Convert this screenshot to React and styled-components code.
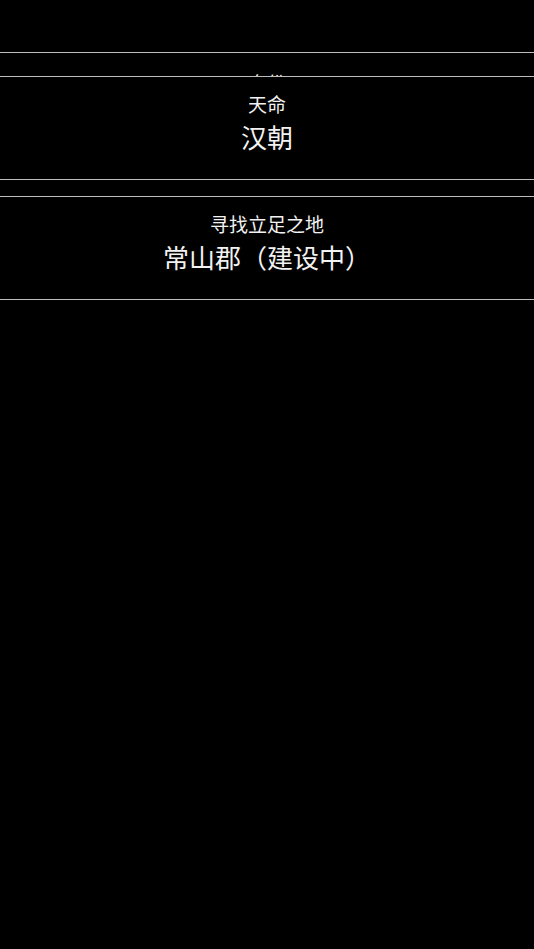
import React from 'react'
import styled, { createGlobalStyle } from 'styled-components'

const Global = createGlobalStyle`
  html, body {
    margin: 0;
    padding: 0;
    background: #000;
  }
  body {
    font-family: "Noto Sans CJK SC", "Noto Sans", sans-serif;
    color: #f2f2f2;
  }
`

const Page = styled.div`
  min-height: 949px;
  background: #000;
  display: flex;
  flex-direction: column;
`

const Header = styled.div`
  height: 52px;
  border-bottom: 1px solid #bdbdbd;
`

const Peek = styled.div`
  height: 23px;
  overflow: hidden;
  display: flex;
  flex-direction: column;
  justify-content: flex-end;
  align-items: center;
`

const PeekText = styled.div`
  font-size: 19px;
  line-height: 19px;
  margin-bottom: -16px;
`

const List = styled.div`
  display: flex;
  flex-direction: column;
  gap: 16px;
`

const Card = styled.div`
  border-top: 1px solid #bdbdbd;
  border-bottom: 1px solid #bdbdbd;
  padding: 14px 0 24px;
  display: flex;
  flex-direction: column;
  align-items: center;
  gap: 2px;
`

const Label = styled.div`
  font-size: 19px;
  line-height: 26px;
`

const Value = styled.div`
  font-size: 26px;
  line-height: 36px;
`

const cards = [
  { label: '天命', value: '汉朝' },
  { label: '寻找立足之地', value: '常山郡（建设中）' },
]

export default function App() {
  return (
    <Page>
      <Global />
      <Header />
      <Peek>
        <PeekText>身份</PeekText>
      </Peek>
      <List>
        {cards.map((c) => (
          <Card key={c.label}>
            <Label>{c.label}</Label>
            <Value>{c.value}</Value>
          </Card>
        ))}
      </List>
    </Page>
  )
}
